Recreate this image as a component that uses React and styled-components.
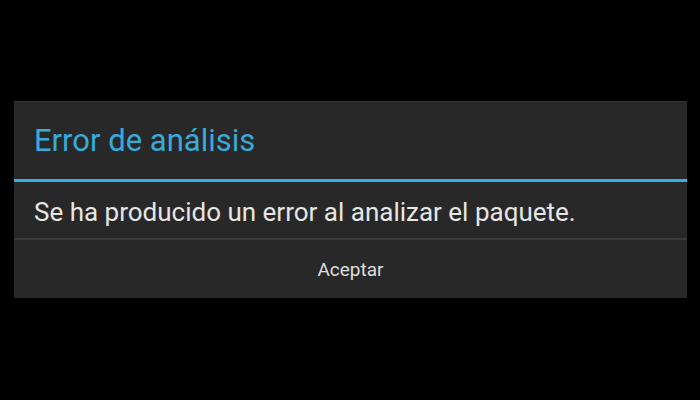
import React from 'react';
import styled, { createGlobalStyle } from 'styled-components';

const GlobalStyle = createGlobalStyle`
  html, body {
    margin: 0;
    padding: 0;
    background: #000000;
  }
  body {
    font-family: Roboto, "Noto Sans", "Liberation Sans", sans-serif;
  }
`;

const Screen = styled.div`
  width: 700px;
  height: 400px;
  background: #000000;
  display: flex;
  flex-direction: column;
  padding-top: 101px;
  padding-left: 14px;
  box-sizing: border-box;
`;

const Dialog = styled.div`
  width: 673px;
  background: #282828;
  display: flex;
  flex-direction: column;
  border-top: 1px solid #333333;
`;

const TitleBar = styled.div`
  height: 77px;
  display: flex;
  align-items: center;
  padding-left: 20px;
  border-bottom: 3px solid #33b0e0;
`;

const Title = styled.h1`
  margin: 0;
  font-weight: 400;
  font-size: 31px;
  color: #38aadb;
  white-space: nowrap;
`;

const Body = styled.div`
  height: 58px;
  display: flex;
  align-items: center;
  padding-left: 20px;
  padding-top: 4px;
  box-sizing: border-box;
  border-bottom: 2px solid #3a3a3a;
`;

const Message = styled.p`
  margin: 0;
  font-size: 26px;
  color: #e6e6e6;
  white-space: nowrap;
`;

const Button = styled.button`
  height: 58px;
  background: transparent;
  border: none;
  color: #dedede;
  font-family: inherit;
  font-size: 19px;
  cursor: pointer;
`;

export default function App() {
  return (
    <>
      <GlobalStyle />
      <Screen>
        <Dialog>
          <TitleBar>
            <Title>Error de análisis</Title>
          </TitleBar>
          <Body>
            <Message>Se ha producido un error al analizar el paquete.</Message>
          </Body>
          <Button>Aceptar</Button>
        </Dialog>
      </Screen>
    </>
  );
}
